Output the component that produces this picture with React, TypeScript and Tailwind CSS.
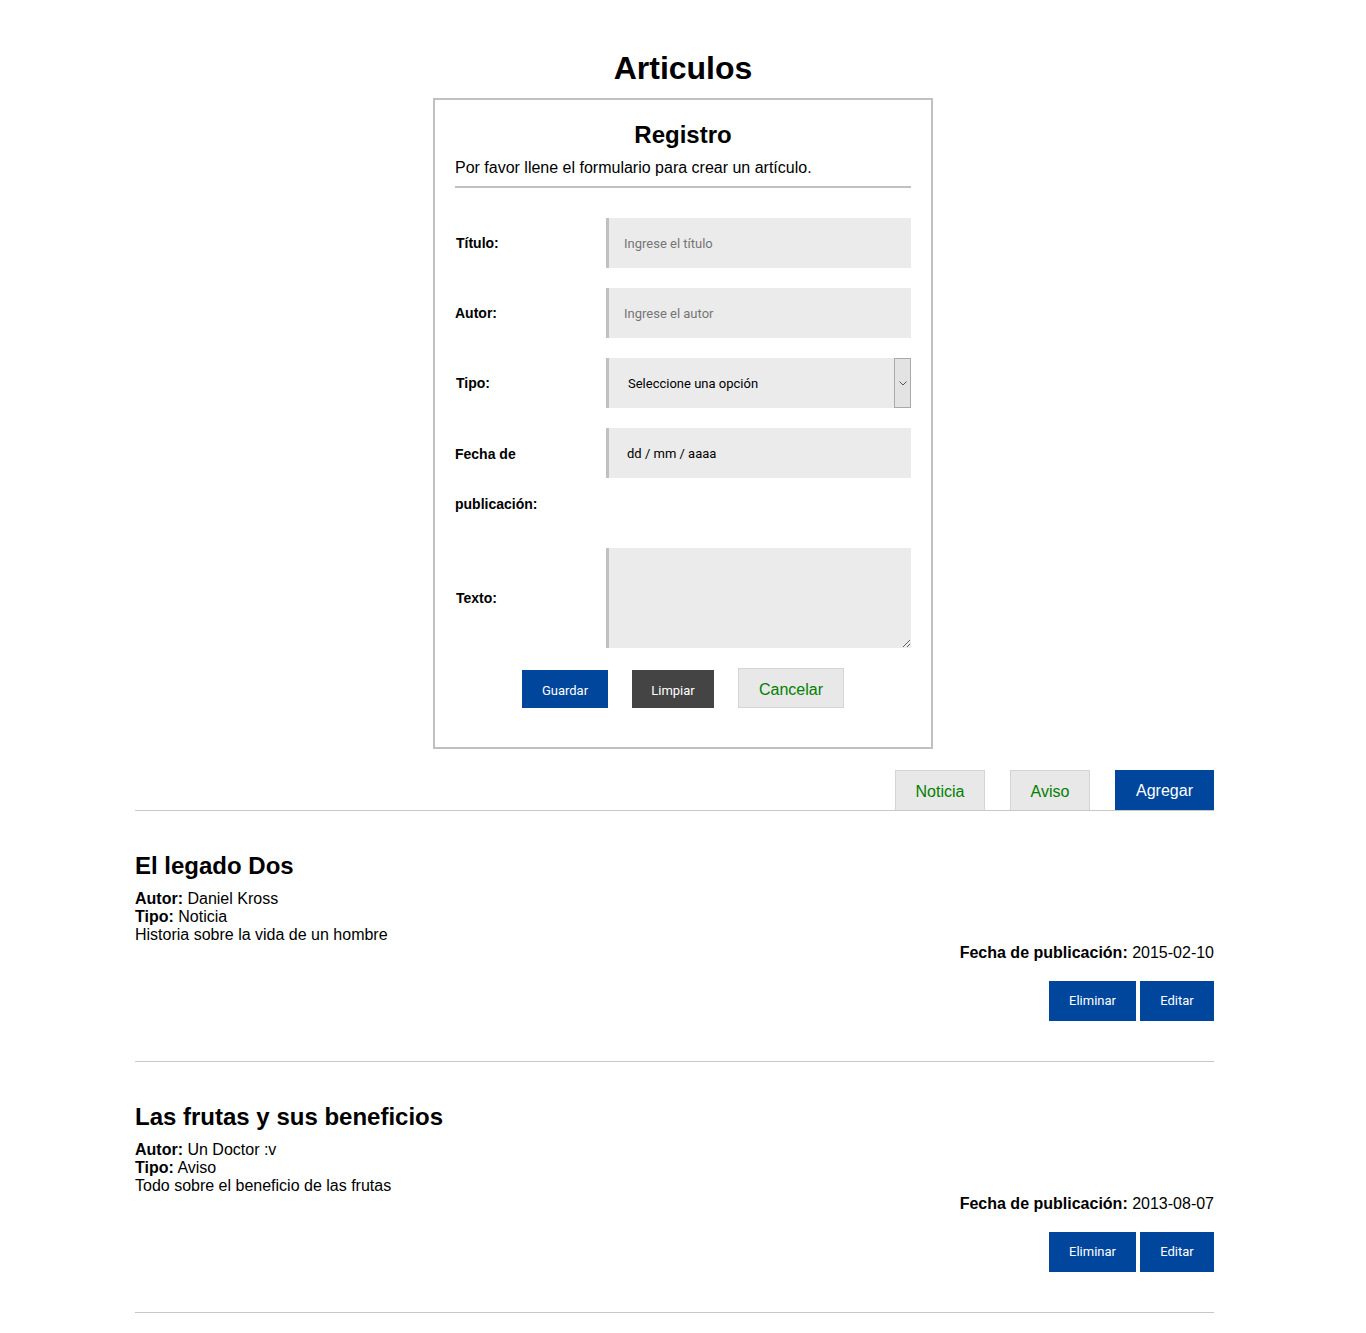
import React from "react";

const arial = { fontFamily: '"Liberation Sans", Arial, sans-serif' };

function Row({ label, children, h = "h-[50px]" }: { label: React.ReactNode; children: React.ReactNode; h?: string }) {
  return (
    <div className="flex">
      <div className={`w-[151px] shrink-0 flex items-center text-[14px] font-bold ${h}`}>{label}</div>
      <div className="w-[305px]">{children}</div>
    </div>
  );
}

const inputCls =
  "w-full h-[50px] bg-[#ebebeb] border-l-[3px] border-[#c0c0c0] pl-[15px] text-[13px] outline-none placeholder:text-[#757575] text-black";

function Article({ title, autor, tipo, texto, fecha }: { title: string; autor: string; tipo: string; texto: string; fecha: string }) {
  return (
    <div className="border-b border-[#c8c8c8] pt-[41px] pb-[40px]">
      <h2 className="text-[24px] font-bold leading-[28px] mb-[10px]">{title}</h2>
      <div className="text-[16px] leading-[18px]">
        <div><b>Autor:</b> {autor}</div>
        <div><b>Tipo:</b> {tipo}</div>
        <div>{texto}</div>
        <div className="text-right"><b>Fecha de publicación:</b> {fecha}</div>
      </div>
      <div className="flex justify-end gap-[4px] mt-[19px]" style={{ fontFamily: "Roboto, sans-serif" }}>
        <button className="w-[87px] h-[40px] bg-[#00469c] text-white text-[13px]">Eliminar</button>
        <button className="w-[74px] h-[40px] bg-[#00469c] text-white text-[13px]">Editar</button>
      </div>
    </div>
  );
}

export default function App() {
  return (
    <div className="bg-white text-black min-h-[1333px]" style={arial}>
      <h1 className="text-[32px] font-bold leading-[37px] text-center pt-[50px] mb-[11px]">Articulos</h1>
      <div className="mx-auto w-[500px] border-2 border-[#c0c0c0] px-5 pt-[21px] pb-[39px]">
        <h2 className="text-[24px] font-bold leading-[28px] text-center">Registro</h2>
        <p className="text-[16px] leading-[18px] mt-[10px]">Por favor llene el formulario para crear un artículo.</p>
        <div className="h-[2px] bg-[#c0c0c0] mt-[9px] mb-[30px]" />
        <div className="flex flex-col gap-5" style={{ fontFamily: "Roboto, sans-serif" }}>
          <Row label={<span style={arial} className="pl-px">Título:</span>}>
            <input className={inputCls} placeholder="Ingrese el título" />
          </Row>
          <Row label={<span style={arial}>Autor:</span>}>
            <input className={inputCls} placeholder="Ingrese el autor" />
          </Row>
          <Row label={<span style={arial} className="pl-px">Tipo:</span>}>
            <div className="relative h-[50px] bg-[#ebebeb] border-l-[3px] border-[#c0c0c0] flex items-center pl-[19px] pt-px text-[13px]">
              Seleccione una opción
              <div className="absolute right-0 top-0 h-[50px] w-[17px] border border-[#a9a9a9] bg-[#e3e3e3] flex items-center justify-center">
                <svg width="8" height="5" viewBox="0 0 8 5" fill="none">
                  <path d="M0.5 0.5 L4 4 L7.5 0.5" stroke="#555" strokeWidth="1" />
                </svg>
              </div>
            </div>
          </Row>
          <div className="flex">
            <div className="w-[151px] shrink-0 text-[14px] font-bold leading-[50px] relative top-px" style={arial}>
              Fecha de<br />publicación:
            </div>
            <div className="w-[305px]">
              <div className="h-[50px] bg-[#ebebeb] border-l-[3px] border-[#c0c0c0] flex items-center pl-[18px] pt-px text-[13px]">
                dd / mm / aaaa
              </div>
            </div>
          </div>
          <Row label={<span style={arial} className="pl-px">Texto:</span>} h="h-[100px]">
            <textarea className="w-full h-[100px] block bg-[#ebebeb] border-l-[3px] border-[#c0c0c0] outline-none" />
          </Row>
        </div>
        <div className="flex justify-center items-end gap-6 mt-5">
          <button className="w-[86px] h-[38px] pt-[3px] bg-[#00469c] text-white text-[13px]" style={{ fontFamily: "Roboto, sans-serif" }}>Guardar</button>
          <button className="w-[82px] h-[38px] pt-[3px] bg-[#444444] text-white text-[13px]" style={{ fontFamily: "Roboto, sans-serif" }}>Limpiar</button>
          <button className="w-[106px] h-[40px] pt-[3px] bg-[#e8e8e8] border border-[#d4d4d4] text-[#008000] text-[16px]">Cancelar</button>
        </div>
      </div>

      <div className="ml-[135px] w-[1079px]">
        <div className="flex justify-end gap-[25px] mt-[21px] border-b border-[#c8c8c8]">
          <button className="w-[90px] h-[40px] pt-[2px] bg-[#e8e8e8] border border-[#d4d4d4] border-b-0 text-[#008000] text-[16px]">Noticia</button>
          <button className="w-[80px] h-[40px] pt-[2px] bg-[#e8e8e8] border border-[#d4d4d4] border-b-0 text-[#008000] text-[16px]">Aviso</button>
          <button className="w-[99px] h-[40px] pt-[2px] bg-[#00469c] text-white text-[16px]">Agregar</button>
        </div>
        <Article title="El legado Dos" autor="Daniel Kross" tipo="Noticia" texto="Historia sobre la vida de un hombre" fecha="2015-02-10" />
        <Article title="Las frutas y sus beneficios" autor="Un Doctor :v" tipo="Aviso" texto="Todo sobre el beneficio de las frutas" fecha="2013-08-07" />
      </div>
    </div>
  );
}
